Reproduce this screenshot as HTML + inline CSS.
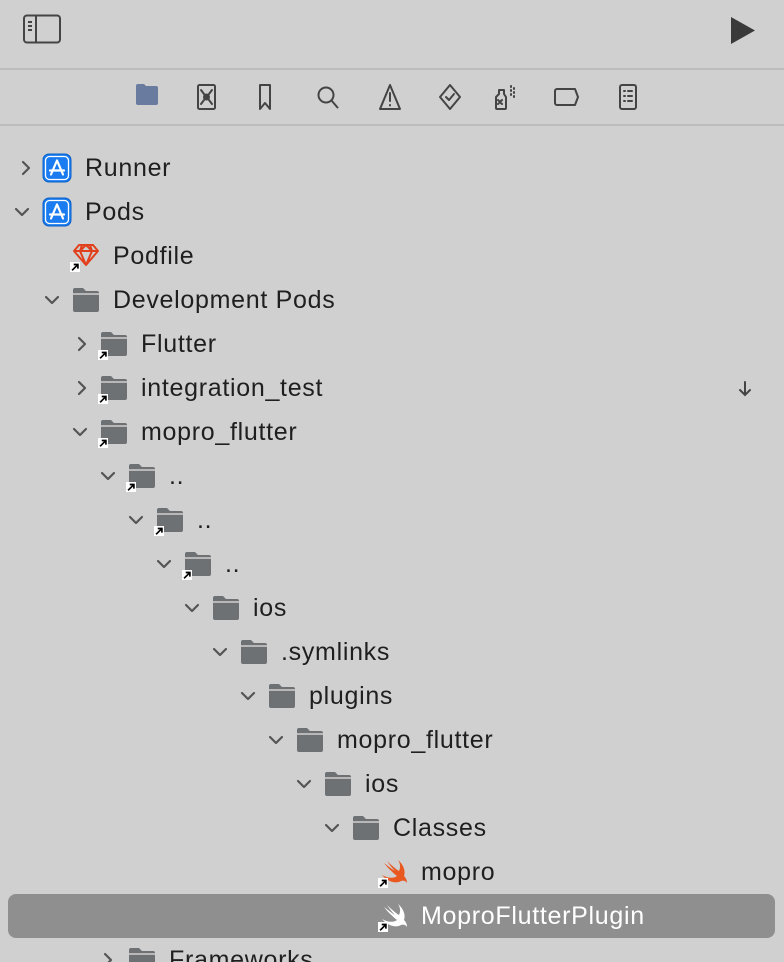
<!DOCTYPE html>
<html><head><meta charset="utf-8"><style>
*{margin:0;padding:0;box-sizing:border-box}
html,body{width:784px;height:962px;overflow:hidden}
body{background:#d0d0d0;position:relative;font-family:"Liberation Sans",sans-serif;color:#1f1f1f}
.hr{position:absolute;left:0;width:784px;height:2px;background:#bcbcbc}
.row{position:absolute;left:0;width:784px;height:44px}
.row span{position:absolute;top:8px;font-size:25px;letter-spacing:0.7px;line-height:28px;white-space:nowrap}
.chev{position:absolute;top:13px;width:18px;height:18px}
.ic{position:absolute;top:8px}
.sel{position:absolute;left:8px;top:894px;width:767px;height:44px;background:#8f8f8f;border-radius:8px}
</style></head><body>
<svg width="0" height="0" style="position:absolute">
<defs>
<symbol id="fold" viewBox="0 0 30 26"><path d="M2 3a2 2 0 0 1 2-2h8l3 3h11a2 2 0 0 1 2 2v17a2 2 0 0 1-2 2H4a2 2 0 0 1-2-2z" fill="#6e7174"/><path d="M2 7h26" stroke="#d0d0d0" stroke-width="1.5"/></symbol>
<symbol id="cr" viewBox="0 0 18 18"><path d="M6 3l6 6-6 6" fill="none" stroke="#555" stroke-width="2.2" stroke-linecap="round" stroke-linejoin="round"/></symbol>
<symbol id="cd" viewBox="0 0 18 18"><path d="M3 6l6 6 6-6" fill="none" stroke="#555" stroke-width="2.2" stroke-linecap="round" stroke-linejoin="round"/></symbol>
<symbol id="lnk" viewBox="0 0 12 12"><rect width="12" height="12" fill="#fff"/><path d="M2.5 10L9 3.5M4.5 3h5v5" fill="none" stroke="#000" stroke-width="2"/></symbol>
<symbol id="app" viewBox="0 0 30 30"><rect x="1" y="1" width="28" height="28" rx="6" fill="#1a7cf0" stroke="#0a5fc8" stroke-width="1"/><rect x="3.5" y="3.5" width="23" height="23" rx="4" fill="none" stroke="#fff" stroke-width="1.3"/><path d="M15 7.5L9 21.5M15 7.5l6 14M8 17.5h14" stroke="#fff" stroke-width="2.2" stroke-linecap="round"/></symbol>
<symbol id="swift" viewBox="0 0 30 28"><path d="M18 2c5 4 8 11 6 16 3 3 3 6 3 7-1-2-4-3-6-2-5 3-13 1-19-6 5 3 11 4 15 1C12 14 7 9 4 5c4 3 9 7 11 8C12 10 9 6 7 3c4 4 10 9 12 10 2-4 1-8-1-11z" fill="currentColor"/></symbol>
</defs></svg>

<svg style="position:absolute;left:22px;top:14px" width="40" height="30" viewBox="0 0 40 30"><rect x="2" y="1.5" width="36" height="27" rx="3" fill="none" stroke="#444" stroke-width="2"/><path d="M14 2v26M6 8h4M6 12h4M6 16h4" stroke="#444" stroke-width="2"/></svg>
<svg style="position:absolute;left:728px;top:16px" width="30" height="30" viewBox="0 0 30 30"><path d="M3 1l24 13.5L3 28z" fill="#3a3a3a"/></svg>
<div class="hr" style="top:68px"></div>
<svg style="position:absolute;left:130px;top:80px" width="530" height="34" viewBox="0 0 530 34">
<g fill="none" stroke="#444" stroke-width="2" stroke-linecap="round" stroke-linejoin="round">
<path d="M6 6a2 2 0 0 1 2-2h6l2 2h10a2 2 0 0 1 2 2v15a2 2 0 0 1-2 2H8a2 2 0 0 1-2-2z" fill="#6a7ba0" stroke="none"/>
<rect x="68" y="5" width="17" height="24" rx="1.5"/><circle cx="76.5" cy="17" r="2.5" fill="#444"/><path d="M71 10l3 4M82 10l-3 4M71 24l3-4M82 24l-3-4"/>
<path d="M130 5h10v24l-5-6-5 6z"/>
<circle cx="196" cy="15" r="7.5"/><path d="M201.5 20.5l6 7"/>
<path d="M260 5l-10 24h20zM260 13v8M260 25v.5"/>
<path d="M320 5l10 12-10 12-10-12zM316 17l3 3 5-6"/>
<path d="M369 10h5v4l2 3v11a1 1 0 0 1-1 1h-8a1 1 0 0 1-1-1V17l3-3zM368 20l4 4M372 20l-4 4M381 6v1M384 8v1M381 10v1M384 12v1M381 14v1M384 16v1"/>
<path d="M427 9h18l3 8-3 8h-18a2 2 0 0 1-2-2V11a2 2 0 0 1 2-2z"/>
<rect x="490" y="5" width="16" height="24" rx="2"/><path d="M494 11h1M498 11h4M494 16h1M498 16h4M494 21h1M498 21h4"/>
</g></svg>
<div class="hr" style="top:124px"></div>

<div class="row" style="top:146px"><svg class="chev" style="left:17px"><use href="#cr"/></svg><svg class="ic" style="left:42px;top:7px" width="30" height="30"><use href="#app"/></svg><span style="left:85px">Runner</span></div>
<div class="row" style="top:190px"><svg class="chev" style="left:13px"><use href="#cd"/></svg><svg class="ic" style="left:42px;top:7px" width="30" height="30"><use href="#app"/></svg><span style="left:85px">Pods</span></div>
<div class="row" style="top:234px"><svg class="ic" style="left:72px;top:9px" width="28" height="24" viewBox="0 0 28 24"><path d="M7 2h14l5 6-12 14L2 8z M2 8h24M10 2l-2 6 6 14 6-14-2-6M8 8l6-6 6 6" fill="none" stroke="#e2401c" stroke-width="2" stroke-linejoin="round"/></svg><svg style="position:absolute;left:70px;top:28px" width="10" height="10"><use href="#lnk"/></svg><span style="left:113px">Podfile</span></div>
<div class="row" style="top:278px"><svg class="chev" style="left:43px"><use href="#cd"/></svg><svg class="ic" style="left:71px;top:9px" width="30" height="26"><use href="#fold"/></svg><span style="left:113px">Development Pods</span></div>
<div class="row" style="top:322px"><svg class="chev" style="left:73px"><use href="#cr"/></svg><svg class="ic" style="left:99px;top:9px" width="30" height="26"><use href="#fold"/></svg><svg style="position:absolute;left:98px;top:28px" width="10" height="10"><use href="#lnk"/></svg><span style="left:141px">Flutter</span></div>
<div class="row" style="top:366px"><svg class="chev" style="left:73px"><use href="#cr"/></svg><svg class="ic" style="left:99px;top:9px" width="30" height="26"><use href="#fold"/></svg><svg style="position:absolute;left:98px;top:28px" width="10" height="10"><use href="#lnk"/></svg><span style="left:141px">integration_test</span><svg style="position:absolute;left:737px;top:14px" width="16" height="18" viewBox="0 0 16 18"><path d="M8 2v13M3 10l5 5 5-5" fill="none" stroke="#444" stroke-width="2" stroke-linecap="round"/></svg></div>
<div class="row" style="top:410px"><svg class="chev" style="left:71px"><use href="#cd"/></svg><svg class="ic" style="left:99px;top:9px" width="30" height="26"><use href="#fold"/></svg><svg style="position:absolute;left:98px;top:28px" width="10" height="10"><use href="#lnk"/></svg><span style="left:141px">mopro_flutter</span></div>
<div class="row" style="top:454px"><svg class="chev" style="left:99px"><use href="#cd"/></svg><svg class="ic" style="left:127px;top:9px" width="30" height="26"><use href="#fold"/></svg><svg style="position:absolute;left:126px;top:28px" width="10" height="10"><use href="#lnk"/></svg><span style="left:169px">..</span></div>
<div class="row" style="top:498px"><svg class="chev" style="left:127px"><use href="#cd"/></svg><svg class="ic" style="left:155px;top:9px" width="30" height="26"><use href="#fold"/></svg><svg style="position:absolute;left:154px;top:28px" width="10" height="10"><use href="#lnk"/></svg><span style="left:197px">..</span></div>
<div class="row" style="top:542px"><svg class="chev" style="left:155px"><use href="#cd"/></svg><svg class="ic" style="left:183px;top:9px" width="30" height="26"><use href="#fold"/></svg><svg style="position:absolute;left:182px;top:28px" width="10" height="10"><use href="#lnk"/></svg><span style="left:225px">..</span></div>
<div class="row" style="top:586px"><svg class="chev" style="left:183px"><use href="#cd"/></svg><svg class="ic" style="left:211px;top:9px" width="30" height="26"><use href="#fold"/></svg><span style="left:253px">ios</span></div>
<div class="row" style="top:630px"><svg class="chev" style="left:211px"><use href="#cd"/></svg><svg class="ic" style="left:239px;top:9px" width="30" height="26"><use href="#fold"/></svg><span style="left:281px">.symlinks</span></div>
<div class="row" style="top:674px"><svg class="chev" style="left:239px"><use href="#cd"/></svg><svg class="ic" style="left:267px;top:9px" width="30" height="26"><use href="#fold"/></svg><span style="left:309px">plugins</span></div>
<div class="row" style="top:718px"><svg class="chev" style="left:267px"><use href="#cd"/></svg><svg class="ic" style="left:295px;top:9px" width="30" height="26"><use href="#fold"/></svg><span style="left:337px">mopro_flutter</span></div>
<div class="row" style="top:762px"><svg class="chev" style="left:295px"><use href="#cd"/></svg><svg class="ic" style="left:323px;top:9px" width="30" height="26"><use href="#fold"/></svg><span style="left:365px">ios</span></div>
<div class="row" style="top:806px"><svg class="chev" style="left:323px"><use href="#cd"/></svg><svg class="ic" style="left:351px;top:9px" width="30" height="26"><use href="#fold"/></svg><span style="left:393px">Classes</span></div>
<div class="row" style="top:850px"><svg class="ic" style="left:380px;top:8px;color:#e8581f" width="30" height="28"><use href="#swift"/></svg><svg style="position:absolute;left:378px;top:28px" width="10" height="10"><use href="#lnk"/></svg><span style="left:421px">mopro</span></div>
<div class="sel"></div>
<div class="row" style="top:894px"><svg class="ic" style="left:380px;top:8px;color:#fff" width="30" height="28"><use href="#swift"/></svg><svg style="position:absolute;left:378px;top:28px" width="10" height="10"><use href="#lnk"/></svg><span style="left:421px;color:#fff">MoproFlutterPlugin</span></div>
<div class="row" style="top:938px"><svg class="chev" style="left:99px"><use href="#cr"/></svg><svg class="ic" style="left:127px;top:9px" width="30" height="26"><use href="#fold"/></svg><span style="left:169px">Frameworks</span></div>
</body></html>
